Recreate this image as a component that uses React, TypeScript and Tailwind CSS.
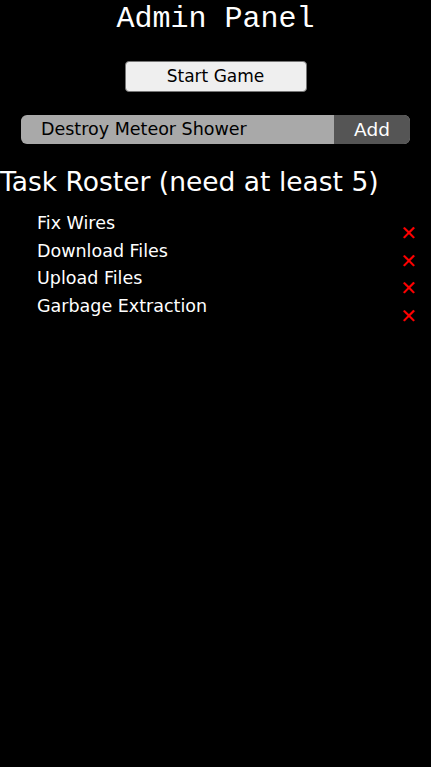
import { useState } from "react";

// Admin panel: start button, add-task row, task roster list

const body = "font-['DejaVu_Sans',sans-serif]";

export default function App() {
  const [tasks, setTasks] = useState([
    "Fix Wires",
    "Download Files",
    "Upload Files",
    "Garbage Extraction",
  ]);
  const [draft, setDraft] = useState("Destroy Meteor Shower");

  return (
    <div className={`min-h-[767px] bg-black text-white ${body}`}>
      <h1 className="pt-[1px] text-center font-['Liberation_Mono',monospace] text-[30px] leading-[36px]">
        Admin Panel
      </h1>

      <div className="mt-[24px] flex justify-center">
        <button className="h-[31px] w-[182px] rounded-[4px] border border-[#767676] bg-[#efefef] text-[17px] text-black">
          Start Game
        </button>
      </div>

      <div className="mx-[21px] mt-[23px] flex h-[29px] overflow-hidden rounded-[6px] bg-[#a9a9a9]">
        <input
          className="min-w-0 flex-1 bg-transparent pl-[20px] text-[17.5px] text-black outline-none"
          value={draft}
          onChange={(e) => setDraft(e.target.value)}
        />
        <button
          className="w-[76px] bg-[#555555] text-[18.5px] text-white"
          onClick={() => {
            if (draft.trim()) setTasks([...tasks, draft.trim()]);
            setDraft("");
          }}
        >
          Add
        </button>
      </div>

      <h2 className="mt-[21px] text-[26.5px] leading-[34px]">Task Roster (need at least 5)</h2>

      <ul className="mt-[13px] pl-[37px] pr-[14px]">
        {tasks.map((t, i) => (
          <li key={i} className="flex h-[27.5px] items-start justify-between text-[17.5px] leading-[22px]">
            <span>{t}</span>
            <button
              className="mt-[11px] -mb-[11px] text-[20px] leading-[20px] text-[#ff0000]"
              onClick={() => setTasks(tasks.filter((_, j) => j !== i))}
            >
              ✕
            </button>
          </li>
        ))}
      </ul>
    </div>
  );
}
